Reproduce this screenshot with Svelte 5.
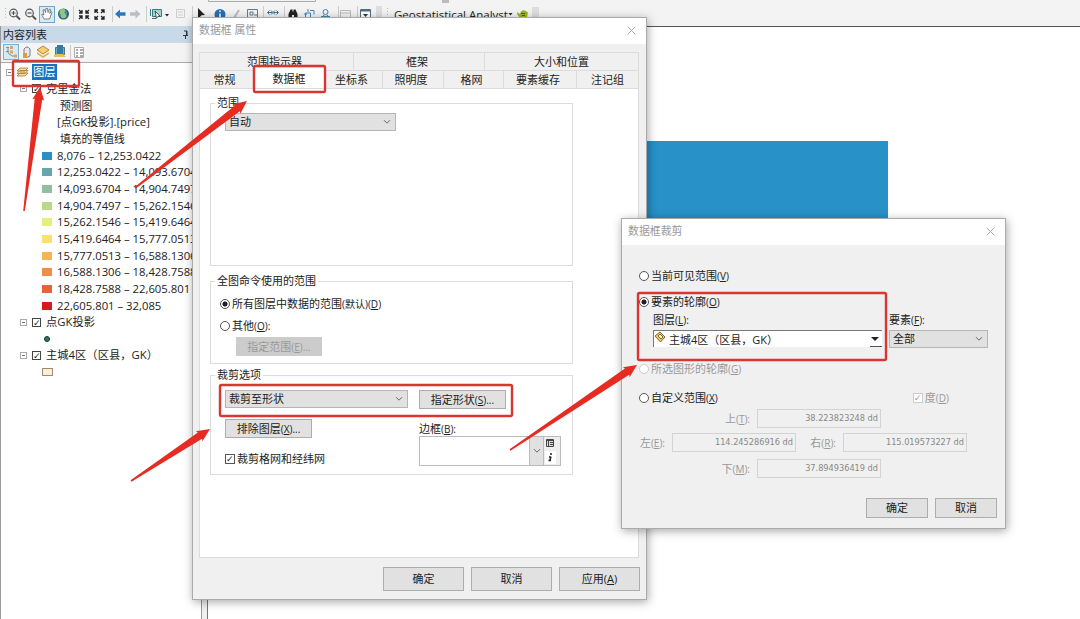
<script lang="ts">
	const classes = [
		{ color: '#2b8fc4', label: '8,076 – 12,253.0422' },
		{ color: '#66a6ad', label: '12,253.0422 – 14,093.6704' },
		{ color: '#93bd9e', label: '14,093.6704 – 14,904.7497' },
		{ color: '#bcd68c', label: '14,904.7497 – 15,262.1546' },
		{ color: '#e3f07b', label: '15,262.1546 – 15,419.6464' },
		{ color: '#fbe16a', label: '15,419.6464 – 15,777.0513' },
		{ color: '#f2b552', label: '15,777.0513 – 16,588.1306' },
		{ color: '#ee8f45', label: '16,588.1306 – 18,428.7588' },
		{ color: '#e5653a', label: '18,428.7588 – 22,605.801' },
		{ color: '#d7191c', label: '22,605.801 – 32,085' }
	];

	const backTabs = [
		{ label: '范围指示器', width: 154 },
		{ label: '框架', width: 131 },
		{ label: '大小和位置', width: 153 }
	];

	const frontTabs = [
		{ label: '常规', width: 54 },
		{ label: '数据框', width: 71, active: true },
		{ label: '坐标系', width: 58 },
		{ label: '照明度', width: 61 },
		{ label: '格网', width: 60 },
		{ label: '要素缓存', width: 73 },
		{ label: '注记组', width: 61 }
	];

	// tail x, tail y, tip x, tip y
	const arrows = [
		[24, 211, 40, 87],
		[135, 188, 247, 101],
		[131, 481, 210, 429],
		[510, 450, 637, 365]
	];

	const boxes = [
		[13, 61, 66, 25],
		[254, 66, 71, 26],
		[220, 385, 292, 31],
		[638, 293, 248, 67]
	];

	function arrowPoints([x1, y1, x2, y2]: number[]) {
		const len = Math.hypot(x2 - x1, y2 - y1);
		const ux = (x2 - x1) / len;
		const uy = (y2 - y1) / len;
		const at = (d: number, w: number) => `${x1 + ux * d - uy * w},${y1 + uy * d + ux * w}`;
		return [at(0, 0.8), at(len - 12, 3.8), at(len - 13, 6), at(len, 0), at(len - 13, -6), at(len - 12, -3.8), at(0, -0.8)].join(' ');
	}
</script>

{#snippet chevron()}
	<svg class="chevron" width="8" height="6" viewBox="0 0 8 6"><path d="M1 1.2 4 4.2 7 1.2" fill="none" stroke="#666" stroke-width="1" /></svg>
{/snippet}

{#snippet closeIcon()}
	<svg width="9" height="9" viewBox="0 0 9 9"><path d="M.7.7 8.3 8.3M8.3.7.7 8.3" stroke="#aaa" stroke-width="1" /></svg>
{/snippet}

<div class="app">
	<div class="ribbon">
		<svg width="545" height="26" viewBox="0 0 545 26" fill="none">
			<path d="M5.500 8v12" stroke="#bbb" stroke-dasharray="1 2" />
			<g stroke="#555" stroke-width="1.200">
				<circle cx="13.500" cy="13" r="3.800" fill="#eef3f6" />
				<path d="m16.500 16 3.500 3.500" stroke-width="2" />
				<path d="M11.500 13h4M13.500 11v4" />
				<circle cx="29.500" cy="13" r="3.800" fill="#eef3f6" />
				<path d="m32.500 16 3.500 3.500" stroke-width="2" />
				<path d="M27.500 13h4" />
			</g>
			<rect x="39.500" y="6.500" width="15" height="16" fill="#d4eaf7" stroke="#6aa9ce" />
			<path d="M44 19c-1-3-3-4-2-5l2 1-1-5 1.500-.5 1 3 .5-4h1.500l.5 4 1.500-3.500 1.200.5-1 4 1.500-2 .8.800-2.500 6.700z" fill="#fff" stroke="#666" stroke-width=".8" />
			<circle cx="63.500" cy="14" r="5.500" fill="#335f78" />
			<circle cx="63" cy="13.500" r="4" fill="#4d90b5" />
			<path d="M60 10c3-2 6-1 5 1s-1 2 1 4-2 4-4 3 0-4-2-4z" fill="#8ccc78" />
			<path d="M73.500 6v16M112.500 6v16M146.500 6v16M192.500 6v16M263.500 6v16M284.500 6v16M338.500 6v16M357.500 6v16" stroke="#ccc" />
			<g stroke="#222" stroke-width="1.300">
				<path d="m79 10 3 3m0-3v3h-3M89 10l-3 3m0-3v3h3M79 19l3-3m0 3v-3h-3M89 19l-3-3m0 3v-3h3" />
				<path d="m98 13-3-3m0 3v-3h3M101 13l3-3m0 3v-3h-3M98 16l-3 3m0-3v3h3M101 16l3 3m0-3v3h-3" />
			</g>
			<path d="m115 14 5-4.500v2.700h5.500v3.600H120v2.700z" fill="#2878c3" />
			<path d="m140.500 14-5-4.500v2.700H130v3.600h5.500v2.700z" fill="#b9bfc4" />
			<path d="M152.500 9.500h9v7h-9z" fill="#a5d6cf" stroke="#377b87" />
			<path d="m155 11 5 5-2 .3-1.500 2z" fill="#fff" stroke="#333" stroke-width=".8" />
			<path d="M150.500 9v7M152 18.500h4" stroke="#377b87" />
			<path d="m165 14 4 0-2 2.500z" fill="#222" />
			<path d="M176.500 9.500h8v8h-8zM178 12h5M178 15h5" stroke="#ccc" />
			<path d="m198 8 7 7-3.500.3L198 19z" fill="#222" />
			<circle cx="220" cy="14.500" r="5.500" fill="#2371b8" />
			<path d="M220 13.500v4M220 10.500v1.500" stroke="#fff" stroke-width="1.500" />
			<path d="m234 18 5-8" stroke="#bbb" stroke-width="2" />
			<path d="M247.500 9.500h10v8h-10zM250 12h3v3h-3zM254 15h3" stroke="#607c91" />
			<path d="M268 12.500h4M274 12.500h4M269.500 10.500l-2 2 2 2M271 10.500l2 2-2 2M275 10.500l-2 2 2 2M276.500 10.500l2 2-2 2" stroke="#3b7191" />
			<path d="M288.500 18v-4l2-4.500h2v2h1v-2h2l2 4.500v4h-3.500v-3h-2v3z" fill="#222" />
			<path d="M305.500 18v-5h5v5M310 10.500h4v4M308 9v3M304 14h3" stroke="#3e87bb" />
			<circle cx="325.500" cy="12" r="2.500" stroke="#3e87bb" />
			<path d="M321 16.500h9M323 15l2.500 2 2.500-2" stroke="#3e87bb" />
			<path d="M340.500 10.500h10v8h-10zM340 13h10" stroke="#bbb" />
			<path d="M360.500 9.500h10v9h-10z" fill="#fff" stroke="#536c86" />
			<path d="M361 10.500h9" stroke="#536c86" stroke-width="2" />
			<path d="m363 14 5 0-2.500 3z" fill="#333" />
			<path d="M376 6h6v14h-6z" fill="#ddd" />
			<path d="M387.500 8v12" stroke="#bbb" stroke-dasharray="1 2" />
			<path d="M508.500 13h4l-2 2.500z" fill="#222" />
			<path d="m517 12 3 2q1-5 5-3.500l3 2-1 5h-6q-4-1-4-5.500" fill="#9cb52b" />
			<path d="M521 13.500h4M522 15.500h3" stroke="#52650d" />
			<path d="M532 7h7v13h-7z" fill="#ddd" />
			<path d="M208.500 0v1.500h107V0" stroke="#aaa" />
			<path d="M442 0h7v3h-7z" fill="#bbb" />
		</svg>
		<span class="analyst">Geostatistical Analyst</span>
	</div>

	<div class="workspace">
		<aside>
			<div class="caption">
				<span>内容列表</span>
				<svg width="7" height="10" viewBox="0 0 7 10"><path d="M2 1h3v4M1 5.500h5M3.500 6v3M4.500 1v4" fill="none" stroke="#333" /></svg>
			</div>
			<div class="toc-tools">
				<svg width="90" height="18" viewBox="0 0 90 18" fill="none">
					<rect x="2.500" y="1.500" width="15" height="15" fill="#d6eaf6" stroke="#78b0d0" />
					<path d="M5 4.500h3M5 8.500h3M11 13h3M7 5v5l4 3" stroke="#8b8b8b" />
					<path d="M9 3h3v3H9zM9 7.500h3v3H9zM13 11.500h3v3h-3z" fill="#d9a56a" />
					<path d="M23 6q3-4 6 0v7q-3 3-6 0z" fill="#e6e8f2" stroke="#777796" />
					<path d="M22 10h4v5h-4z" fill="#dc9e3d" />
					<path d="m36 7 6-4 6 4-6 4z" fill="#f5cf72" stroke="#b2873e" />
					<path d="M36 9v2l6 4 6-4V9l-6 4z" fill="#e0b052" />
					<path d="M54.500 4.500h9v7h-9z" fill="#68afcc" stroke="#4b7388" />
					<path d="M56 2h6v9h-6z" fill="#37799e" />
					<path d="m53 12 3-1h6l3 3H53z" fill="#e2bf69" />
					<path d="M69.500 2v14" stroke="#ccc" />
					<path d="M73.500 4.500h9v10h-9z" fill="#fff" stroke="#aaa" />
					<path d="M75 7h2M79 7h3M75 10h2M79 10h3M75 13h2M79 13h3" stroke="#555" />
				</svg>
			</div>
			<div class="tree">
				<div class="row root">
					<span class="expander"></span>
					<svg width="13" height="12" viewBox="0 0 13 12"><path d="m1 10 3-3h8L9 10zM1 7.500 4 4.500h8l-3 3zM1 5l3-3h8L9 5z" fill="#f8dc9c" stroke="#b28340" stroke-width=".9" /></svg>
					<span class="selected">图层</span>
				</div>
				<div class="row layer"><span class="expander"></span><span class="check">✓</span>克里金法</div>
				<div class="row sub">预测图</div>
				<div class="row field">[点GK投影].[price]</div>
				<div class="row sub">填充的等值线</div>
				{#each classes as item}
					<div class="row class-row"><span class="swatch" style="background: {item.color}"></span>{item.label}</div>
				{/each}
				<div class="row layer"><span class="expander"></span><span class="check">✓</span>点GK投影</div>
				<div class="row symbol"><span class="dot"></span></div>
				<div class="row layer"><span class="expander"></span><span class="check">✓</span>主城4区（区县，GK）</div>
				<div class="row symbol"><span class="patch"></span></div>
			</div>
		</aside>
		<div class="splitter"></div>
		<main><div class="raster"></div></main>
	</div>

	<section class="dialog properties">
		<header>数据框 属性{@render closeIcon()}</header>
		<div class="tabs">
			{#each backTabs as tab}
				<span class="tab" style="width: {tab.width}px">{tab.label}</span>
			{/each}
		</div>
		<div class="tabs front">
			{#each frontTabs as tab}
				<span class="tab" class:active={tab.active} style="width: {tab.width}px">{tab.label}</span>
			{/each}
		</div>
		<div class="panel">
			<fieldset class="extent">
				<legend>范围</legend>
				<div class="select">自动{@render chevron()}</div>
			</fieldset>
			<fieldset class="full">
				<legend>全图命令使用的范围</legend>
				<div class="option"><span class="radio on"></span><span>所有图层中数据的范围<small>(默认)(<u>D</u>)</small></span></div>
				<div class="option"><span class="radio"></span><span>其他<small>(<u>O</u>):</small></span></div>
				<div class="button disabled">指定范围<small>(<u>E</u>)...</small></div>
			</fieldset>
			<fieldset class="clip">
				<legend>裁剪选项</legend>
				<div class="line">
					<div class="select">裁剪至形状{@render chevron()}</div>
					<div class="button">指定形状<small>(<u>S</u>)...</small></div>
				</div>
				<div class="line lower">
					<div class="left">
						<div class="button">排除图层<small>(<u>X</u>)...</small></div>
						<div class="option"><span class="checkbox">✓</span><span>裁剪格网和经纬网</span></div>
					</div>
					<div class="border-field">
						<div class="label">边框<small>(<u>B</u>):</small></div>
						<div class="border-pick">
							<span class="preview"></span>
							<span class="drop">{@render chevron()}</span>
							<span class="side">
								<svg width="14" height="14" viewBox="0 0 14 14"><path d="M2.500 2.500h7v7h-7z" fill="#ddd" stroke="#444" /><path d="M2 3.500h8M4.500 3v6M6 5.500h3M6 7.500h3" stroke="#444" /></svg>
								<svg width="14" height="14" viewBox="0 0 14 14"><path d="M1 0h11v13H1z" fill="#fff" /><path d="M6 3h2M7 5.500 6 9M4.500 9.500H7M5 6h2" fill="none" stroke="#222" stroke-width="1.500" /></svg>
							</span>
						</div>
					</div>
				</div>
			</fieldset>
		</div>
		<footer>
			<div class="button">确定</div>
			<div class="button">取消</div>
			<div class="button">应用(<u>A</u>)</div>
		</footer>
	</section>

	<section class="dialog clipping">
		<header>数据框裁剪{@render closeIcon()}</header>
		<div class="content">
			<div class="option visible"><span class="radio"></span><span>当前可见范围<small>(<u>V</u>)</small></span></div>
			<div class="option outline"><span class="radio on"></span><span>要素的轮廓<small>(<u>O</u>)</small></span></div>
			<div class="line pickers">
				<div class="layer-pick">
					<div class="label">图层<small>(<u>L</u>):</small></div>
					<div class="combo">
						<svg width="12" height="12" viewBox="0 0 12 12"><path d="m1 5 5-4 5 5-4.500 5z" fill="#efca4b" stroke="#806b35" /><path d="m4 5 2-2 3 3-2 2z" fill="#fff3b5" stroke="#776b4a" /></svg>
						<span>主城4区（区县，GK）</span>
						<i></i>
					</div>
				</div>
				<div class="feature-pick">
					<div class="label">要素<small>(<u>F</u>):</small></div>
					<div class="select">全部{@render chevron()}</div>
				</div>
			</div>
			<div class="option shape muted"><span class="radio"></span><span>所选图形的轮廓<small>(<u>G</u>)</small></span></div>
			<div class="line custom">
				<div class="option"><span class="radio"></span><span>自定义范围<small>(<u>X</u>)</small></span></div>
				<div class="option muted"><span class="checkbox">✓</span><span>度<small>(<u>D</u>)</small></span></div>
			</div>
			<div class="coords">
				<div class="coord middle"><span>上<small>(<u>T</u>):</small></span><div>38.223823248 dd</div></div>
				<div class="line">
					<div class="coord"><span>左<small>(<u>E</u>):</small></span><div>114.245286916 dd</div></div>
					<div class="coord right"><span>右<small>(<u>R</u>):</small></span><div>115.019573227 dd</div></div>
				</div>
				<div class="coord middle"><span>下<small>(<u>M</u>):</small></span><div>37.894936419 dd</div></div>
			</div>
			<footer>
				<div class="button">确定</div>
				<div class="button">取消</div>
			</footer>
		</div>
	</section>

	<svg class="marks" width="1080" height="619" viewBox="0 0 1080 619">
		{#each boxes as [x, y, w, h]}
			<rect {x} {y} width={w} height={h} rx="1.500" fill="none" stroke="#d93632" stroke-width="2.400" />
		{/each}
		{#each arrows as arrow}
			<polygon points={arrowPoints(arrow)} fill="#e62b22" />
		{/each}
	</svg>
</div>

<style>
	:global(body) {
		background: #fff;
	}

	.app {
		position: relative;
		display: flex;
		flex-direction: column;
		width: 1080px;
		height: 619px;
		overflow: hidden;
		box-sizing: border-box;
		font: 11px/14px "Open Sans", "Noto Sans CJK SC", sans-serif;
		color: #222;
		white-space: nowrap;
	}

	.app * {
		box-sizing: border-box;
	}

	svg {
		display: block;
		flex: none;
	}

	small {
		font-size: 10px;
	}

	u {
		text-underline-offset: 1px;
	}

	.ribbon {
		display: flex;
		height: 26px;
		background: #f3f3f3;
	}

	.analyst {
		margin: 8px 0 0 -151px;
		font-size: 11.5px;
	}

	.workspace {
		display: flex;
		flex: 1;
		min-height: 0;
	}

	aside {
		width: 202px;
		overflow: hidden;
		border: 1px solid #999;
		border-width: 0 1px;
	}

	.caption {
		display: flex;
		justify-content: space-between;
		align-items: center;
		width: 191px;
		height: 17px;
		padding: 0 3px 0 2px;
		background: #c8d9e9;
	}

	.toc-tools {
		height: 20px;
		background: #f4f4f4;
		border-bottom: 1px solid #aaa;
	}

	.tree {
		padding-top: 1px;
		font-size: 11.3px;
	}

	.row {
		display: flex;
		align-items: center;
		height: 16.67px;
	}

	.root {
		padding-left: 5px;
		gap: 3px;
	}

	.selected {
		padding: 0 1px;
		height: 16px;
		line-height: 16px;
		background: #1475c4;
		color: #fff;
	}

	.layer {
		padding-left: 19px;
	}

	.expander {
		width: 7px;
		height: 7px;
		border: 1px solid #aaa;
		background: linear-gradient(#777, #777) center / 3px 1px no-repeat;
	}

	.check {
		width: 9px;
		height: 9px;
		margin: 0 5px 0 5px;
		border: 1px solid #444;
		font: bold 9px/8px "DejaVu Sans", sans-serif;
	}

	.sub {
		padding-left: 59px;
		font-size: 10.8px;
	}

	.field {
		padding-left: 56px;
	}

	.class-row {
		padding-left: 41px;
		gap: 5px;
	}

	.swatch {
		width: 10px;
		height: 8px;
		flex: none;
	}

	.symbol {
		padding-left: 41px;
	}

	.dot {
		width: 6px;
		height: 6px;
		margin-left: 2px;
		border: 1.5px solid #123c2f;
		border-radius: 50%;
		background: #287a5c;
	}

	.patch {
		width: 11px;
		height: 8px;
		border: 1px solid #9a8b73;
		background: #fcefd6;
	}

	.splitter {
		width: 6px;
		background: #f0f0f0;
		border-right: 1px solid #777;
	}

	main {
		flex: 1;
		padding: 114px 0 0 439px;
		border-top: 1px solid #555;
	}

	.raster {
		width: 241px;
		height: 200px;
		background: #2791c8;
	}

	.dialog {
		position: absolute;
		display: flex;
		flex-direction: column;
		background: #f0f0f0;
		border: 1px solid #aaa;
		box-shadow: 1px 2px 9px rgba(0, 0, 0, .35);
		font-size: 11px;
	}

	.properties {
		left: 192px;
		top: 17px;
		width: 455px;
		height: 583px;
	}

	.clipping {
		left: 621px;
		top: 218px;
		width: 385px;
		height: 311px;
	}

	header {
		display: flex;
		align-items: center;
		justify-content: space-between;
		height: 26px;
		padding: 0 10px 2px 6px;
		background: #fff;
		color: #999;
		font-size: 10.9px;
		flex: none;
	}

	.tabs {
		display: flex;
		height: 18px;
		margin: 0 7px 0 6px;
		border: 1px solid #dcdcdc;
		border-width: 1px 0 0 1px;
	}

	header + .tabs {
		margin-top: 8px;
	}

	.tab {
		padding-right: 4px;
		border-right: 1px solid #dcdcdc;
		text-align: center;
		line-height: 18px;
		flex: none;
	}

	.tab:last-child {
		padding-right: 0;
		flex: 1;
	}

	.tab.active {
		height: 22px;
		margin-top: -3px;
		padding-right: 0;
		background: #fff;
		line-height: 21px;
	}

	.panel {
		height: 470px;
		margin: 0 7px 0 6px;
		padding: 7px 65px 0 10px;
		background: #fff;
		border: 1px solid #dcdcdc;
	}

	fieldset {
		margin: 0;
		border: 1px solid #dcdcdc;
		padding: 0 0 0 14px;
		min-width: 0;
	}

	legend {
		margin-left: -10px;
		padding: 0 2px;
		height: 14px;
	}

	.extent {
		height: 170px;
	}

	.select {
		display: flex;
		align-items: center;
		justify-content: space-between;
		height: 18px;
		padding: 0 4px 0 3px;
		border: 1px solid #b5b5b5;
		background: #e1e1e1;
	}

	.extent .select {
		width: 171px;
		margin-top: 3px;
	}

	.full {
		height: 90px;
		margin-top: 8px;
	}

	.option {
		display: flex;
		align-items: center;
		gap: 2px;
		height: 14px;
	}

	.radio {
		width: 10px;
		height: 10px;
		border: 1px solid #555;
		border-radius: 50%;
		background: #fff;
		flex: none;
	}

	.radio.on {
		background: radial-gradient(circle, #222 0 2.3px, #fff 2.8px);
	}

	.full .option {
		margin: 9px 0 0 -5px;
	}

	.full .option + .option {
		margin-top: 8px;
	}

	.button {
		display: flex;
		align-items: center;
		justify-content: center;
		border: 1px solid #adadad;
		background: #e1e1e1;
	}

	.full .button {
		width: 86px;
		height: 19px;
		margin: 4px 0 0 11px;
	}

	.button.disabled {
		border-color: #ccc;
		background: #ccc;
		color: #999;
	}

	.clip {
		height: 107px;
		margin-top: 4px;
	}

	.line {
		display: flex;
	}

	.clip > .line {
		gap: 11px;
		margin-top: 8px;
	}

	.clip .select {
		width: 183px;
	}

	.clip .button {
		width: 87px;
		height: 19px;
	}

	.clip > .lower {
		margin-top: 10px;
	}

	.left {
		width: 183px;
	}

	.left .option {
		margin-top: 14px;
	}

	.checkbox {
		width: 10px;
		height: 10px;
		border: 1px solid #555;
		background: #fff;
		font: 9px/8px "DejaVu Sans", sans-serif;
	}

	.border-field .label {
		margin-top: 3px;
	}

	.border-pick {
		display: flex;
		width: 142px;
		height: 30px;
		border: 1px solid #bbb;
	}

	.preview {
		flex: 1;
	}

	.drop {
		display: flex;
		align-items: center;
		justify-content: center;
		width: 15px;
		background: #e1e1e1;
		border: 1px solid #bbb;
		border-width: 0 1px;
	}

	.side {
		width: 16px;
		background: #eee;
	}

	footer {
		display: flex;
		justify-content: flex-end;
		gap: 7px;
	}

	.properties footer {
		margin: 9px 6px 0 0;
	}

	.properties footer .button {
		width: 81px;
		height: 24px;
	}

	.content {
		padding: 24px 8px 0 17px;
	}

	.outline {
		margin-top: 12px;
	}

	.pickers {
		gap: 7px;
		margin: 4px 0 0 14px;
	}

	.pickers .label {
		height: 17px;
	}

	.layer-pick {
		width: 229px;
	}

	.combo {
		display: flex;
		height: 17px;
		border: 1px solid #777;
		border-width: 1px 0 0 1px;
		background: #fff;
		gap: 3px;
	}

	.combo span {
		line-height: 18px;
	}

	.combo i {
		width: 12px;
		height: 16px;
		margin-left: auto;
		border-bottom: 1px solid #555;
	}

	.combo i::before {
		content: "";
		display: block;
		margin: 6px auto 0 1px;
		width: 0;
		border: 4px solid transparent;
		border-top-color: #222;
		border-bottom: 0;
	}

	.feature-pick {
		width: 99px;
	}

	.shape {
		margin-top: 14px;
	}

	.muted {
		color: #999;
	}

	.muted .radio,
	.muted .checkbox {
		border-color: #ccc;
	}

	.custom {
		justify-content: space-between;
		margin: 15px 48px 0 0;
	}

	.coords {
		margin-top: 4px;
		color: #999;
	}

	.coord {
		display: flex;
		align-items: center;
		justify-content: flex-end;
		gap: 7px;
		width: 157px;
	}

	.coord div {
		width: 124px;
		height: 19px;
		padding: 0 2px;
		border: 1px solid #d3d3d3;
		text-align: right;
		color: #888;
		font: 9.1px/16px "DejaVu Sans Condensed", "DejaVu Sans", sans-serif;
		font-stretch: condensed;
	}

	.coord.middle {
		width: 242px;
	}

	.coords .line {
		margin: 5px 0 7px;
	}

	.coord.right {
		width: 171px;
	}

	.content footer {
		margin-top: 20px;
	}

	.content footer .button {
		width: 62px;
		height: 20px;
	}

	.marks {
		position: absolute;
		left: 0;
		top: 0;
	}
</style>
